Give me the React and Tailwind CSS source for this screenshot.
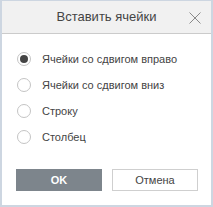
import React from "react";

function Radio({ checked, label }) {
  return (
    <div className="flex items-center h-[26px]">
      <div className="w-[14px] h-[14px] rounded-full border border-[#c4c4c4] bg-white flex items-center justify-center ml-[15px]">
        {checked && <div className="w-[8px] h-[8px] rounded-full bg-[#444444]" />}
      </div>
      <span className="ml-[11px] text-[11px] text-[#444444]">{label}</span>
    </div>
  );
}

export default function App() {
  return (
    <div
      className="w-[213px] h-[207px] bg-white border-x-2 border-b-2 border-t border-[#cdd6e1] flex flex-col"
      style={{ fontFamily: '"Liberation Sans", Arial, sans-serif' }}
    >
      <div className="h-[33px] shrink-0 bg-[#f1f1f1] border-b border-[#cbcbcb] relative flex items-center justify-center">
        <span className="text-[13px] text-[#444444]">Вставить ячейки</span>
        <svg className="absolute right-[10px] top-[11px]" width="12" height="12" viewBox="0 0 12 12">
          <path d="M0.5 0.5 L11.5 11.5 M11.5 0.5 L0.5 11.5" stroke="#8a8a8a" strokeWidth="1" fill="none" />
        </svg>
      </div>
      <div className="flex flex-col pt-[12px]">
        <Radio checked label="Ячейки со сдвигом вправо" />
        <Radio label="Ячейки со сдвигом вниз" />
        <Radio label="Строку" />
        <Radio label="Столбец" />
      </div>
      <div className="flex gap-[10px] pl-[14px] mt-[19px]">
        <button className="w-[86px] h-[22px] bg-[#7d858c] text-white text-[11px] font-bold">OK</button>
        <button className="w-[86px] h-[22px] bg-white border border-[#cfcfcf] text-[#444444] text-[11px]">Отмена</button>
      </div>
    </div>
  );
}
